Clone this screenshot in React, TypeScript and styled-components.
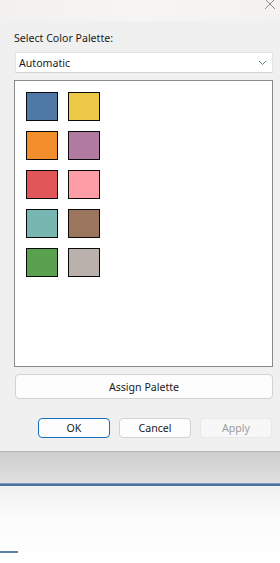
import React from 'react';
import styled, { createGlobalStyle } from 'styled-components';

const GlobalStyle = createGlobalStyle`
  html, body {
    margin: 0;
    padding: 0;
    background: #ffffff;
    overflow: hidden;
  }
  body {
    font-family: 'Noto Sans', 'Liberation Sans', sans-serif;
    color: #1b1b1b;
  }
`;

const Page = styled.div`
  width: 280px;
  height: 563px;
  display: flex;
  flex-direction: column;
`;

const TitleBar = styled.div`
  height: 21px;
  background: linear-gradient(90deg, #f3f1ef 0%, #f6f5f3 50%, #f3f2f0 100%);
  display: flex;
  justify-content: flex-end;
  align-items: flex-start;
  padding-right: 4px;
  box-sizing: border-box;
`;

const Dialog = styled.div`
  background: #f0f0f0;
  padding: 10px 7px 13px 14px;
  display: flex;
  flex-direction: column;
  border-bottom: 1px solid #b4b4b4;
`;

const Label = styled.div`
  font-size: 10.6px;
  line-height: 15px;
  height: 15px;
  margin-bottom: 6px;
`;

const Select = styled.div`
  height: 21px;
  margin-left: 1px;
  background: #ffffff;
  border: 1px solid #e4e4e4;
  border-bottom-color: #d2d2d2;
  box-sizing: border-box;
  display: flex;
  align-items: center;
  justify-content: space-between;
  padding: 0 5px 0 3px;
  font-size: 10.6px;
`;

const PaletteBox = styled.div`
  margin-top: 7px;
  height: 287px;
  background: #ffffff;
  border: 1px solid #878a8e;
  box-sizing: border-box;
  padding: 11px 0 0 11px;
  display: grid;
  grid-template-columns: repeat(2, 32px);
  grid-auto-rows: 29px;
  column-gap: 10px;
  row-gap: 10px;
  align-content: start;
`;

const Swatch = styled.div<{ $color: string }>`
  background: ${(p) => p.$color};
  border: 1.5px solid #0a0a0a;
  box-sizing: border-box;
`;

const Button = styled.button<{ $primary?: boolean; $disabled?: boolean }>`
  font-family: inherit;
  font-size: 10.6px;
  padding: 0;
  box-sizing: border-box;
  border-radius: 4px;
  background: ${(p) => (p.$disabled ? '#f7f7f7' : '#fdfdfd')};
  border: 1px solid
    ${(p) => (p.$primary ? '#1a6fc0' : p.$disabled ? '#e8e8e8' : '#d2d2d2')};
  color: ${(p) => (p.$disabled ? '#9d9d9d' : '#1b1b1b')};
`;

const AssignButton = styled(Button)`
  margin: 7px 0 0 1px;
  height: 25px;
`;

const ButtonRow = styled.div`
  margin-top: 19px;
  display: flex;
  justify-content: flex-end;
  gap: 9px;
  padding-right: 1px;
  & > button {
    width: 72px;
    height: 20px;
  }
`;

const Shadow = styled.div`
  height: 31px;
  background: linear-gradient(180deg, #cdcdcd 0%, #d9d9d9 60%, #e0e0e0 100%);
  border-bottom: 1px solid #7f9cbc;
`;

const BlueLine = styled.div`
  height: 2px;
  background: #4a72a0;
`;

const Backdrop = styled.div`
  flex: 1;
  background: linear-gradient(180deg, #f0f0f0 0%, #fbfbfb 40%, #ffffff 100%);
  display: flex;
  flex-direction: column;
  padding-top: 65px;
`;

const Tick = styled.div`
  width: 18px;
  height: 2px;
  background: #5a80a8;
`;

const colors = [
  '#4e79a7',
  '#edc948',
  '#f28e2b',
  '#b07aa1',
  '#e15759',
  '#ff9da7',
  '#76b7b2',
  '#9c755f',
  '#59a14f',
  '#bab0ac',
];

const App: React.FC = () => {
  return (
    <Page>
      <GlobalStyle />
      <TitleBar>
        <svg width="12" height="10" viewBox="0 0 12 10">
          <path d="M1 -1 L11 9 M11 -1 L1 9" stroke="#8c8c8c" strokeWidth="1" fill="none" />
        </svg>
      </TitleBar>

      <Dialog>
        <Label>Select Color Palette:</Label>
        <Select>
          <span>Automatic</span>
          <svg width="9" height="6" viewBox="0 0 9 6">
            <path d="M1 1 L4.5 4.5 L8 1" stroke="#4a8d6f" strokeWidth="1" fill="none" />
          </svg>
        </Select>

        <PaletteBox>
          {colors.map((c) => (
            <Swatch key={c} $color={c} />
          ))}
        </PaletteBox>

        <AssignButton>Assign Palette</AssignButton>

        <ButtonRow>
          <Button $primary>OK</Button>
          <Button>Cancel</Button>
          <Button $disabled>Apply</Button>
        </ButtonRow>
      </Dialog>

      <Shadow />
      <BlueLine />
      <Backdrop>
        <Tick />
      </Backdrop>
    </Page>
  );
};

export default App;
